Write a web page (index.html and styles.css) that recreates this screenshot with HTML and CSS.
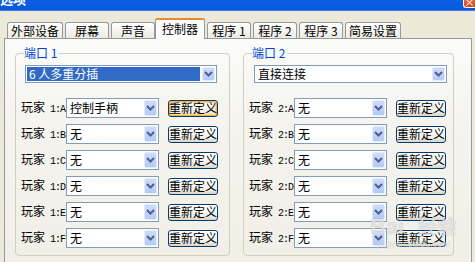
FILE: index.html
```html
<!DOCTYPE html>
<html lang="zh-CN">

<head>
  <meta charset="UTF-8">
  <title>选项</title>
  <link rel="stylesheet" href="styles.css">
</head>

<body>
  <div class="window">
    <div class="titlebar">
      <span class="title">选项</span>
      <span class="close">×</span>
    </div>

    <div class="dialog">
      <!-- tab strip -->
      <div class="tabs">
        <div class="tab">外部设备</div>
        <div class="tab">屏幕</div>
        <div class="tab">声音</div>
        <div class="tab active">控制器</div>
        <div class="tab">程序 1</div>
        <div class="tab">程序 2</div>
        <div class="tab">程序 3</div>
        <div class="tab">简易设置</div>
      </div>

      <div class="panel">
        <!-- port 1 -->
        <fieldset class="group port-1">
          <legend>端口 1</legend>
          <div class="combo wide">
            <span class="value selected">6 人多重分插</span>
            <span class="arrow"><svg width="9" height="6" viewBox="0 0 9 6"><path d="M1 1L4.5 4.5L8 1" /></svg></span>
          </div>

          <div class="rows">
            <div class="row">
              <span class="label">玩家<span class="port"> 1:A</span></span>
              <div class="combo"><span class="value">控制手柄</span><span class="arrow"><svg width="9" height="6" viewBox="0 0 9 6"><path d="M1 1L4.5 4.5L8 1" /></svg></span></div>
              <button class="btn focus">重新定义</button>
            </div>
            <div class="row">
              <span class="label">玩家<span class="port"> 1:B</span></span>
              <div class="combo"><span class="value">无</span><span class="arrow"><svg width="9" height="6" viewBox="0 0 9 6"><path d="M1 1L4.5 4.5L8 1" /></svg></span></div>
              <button class="btn">重新定义</button>
            </div>
            <div class="row">
              <span class="label">玩家<span class="port"> 1:C</span></span>
              <div class="combo"><span class="value">无</span><span class="arrow"><svg width="9" height="6" viewBox="0 0 9 6"><path d="M1 1L4.5 4.5L8 1" /></svg></span></div>
              <button class="btn">重新定义</button>
            </div>
            <div class="row">
              <span class="label">玩家<span class="port"> 1:D</span></span>
              <div class="combo"><span class="value">无</span><span class="arrow"><svg width="9" height="6" viewBox="0 0 9 6"><path d="M1 1L4.5 4.5L8 1" /></svg></span></div>
              <button class="btn">重新定义</button>
            </div>
            <div class="row">
              <span class="label">玩家<span class="port"> 1:E</span></span>
              <div class="combo"><span class="value">无</span><span class="arrow"><svg width="9" height="6" viewBox="0 0 9 6"><path d="M1 1L4.5 4.5L8 1" /></svg></span></div>
              <button class="btn">重新定义</button>
            </div>
            <div class="row">
              <span class="label">玩家<span class="port"> 1:F</span></span>
              <div class="combo"><span class="value">无</span><span class="arrow"><svg width="9" height="6" viewBox="0 0 9 6"><path d="M1 1L4.5 4.5L8 1" /></svg></span></div>
              <button class="btn">重新定义</button>
            </div>
          </div>
        </fieldset>

        <!-- port 2 -->
        <fieldset class="group port-2">
          <legend>端口 2</legend>
          <div class="combo wide">
            <span class="value">直接连接</span>
            <span class="arrow"><svg width="9" height="6" viewBox="0 0 9 6"><path d="M1 1L4.5 4.5L8 1" /></svg></span>
          </div>

          <div class="rows">
            <div class="row">
              <span class="label">玩家<span class="port"> 2:A</span></span>
              <div class="combo"><span class="value">无</span><span class="arrow"><svg width="9" height="6" viewBox="0 0 9 6"><path d="M1 1L4.5 4.5L8 1" /></svg></span></div>
              <button class="btn">重新定义</button>
            </div>
            <div class="row">
              <span class="label">玩家<span class="port"> 2:B</span></span>
              <div class="combo"><span class="value">无</span><span class="arrow"><svg width="9" height="6" viewBox="0 0 9 6"><path d="M1 1L4.5 4.5L8 1" /></svg></span></div>
              <button class="btn">重新定义</button>
            </div>
            <div class="row">
              <span class="label">玩家<span class="port"> 2:C</span></span>
              <div class="combo"><span class="value">无</span><span class="arrow"><svg width="9" height="6" viewBox="0 0 9 6"><path d="M1 1L4.5 4.5L8 1" /></svg></span></div>
              <button class="btn">重新定义</button>
            </div>
            <div class="row">
              <span class="label">玩家<span class="port"> 2:D</span></span>
              <div class="combo"><span class="value">无</span><span class="arrow"><svg width="9" height="6" viewBox="0 0 9 6"><path d="M1 1L4.5 4.5L8 1" /></svg></span></div>
              <button class="btn">重新定义</button>
            </div>
            <div class="row">
              <span class="label">玩家<span class="port"> 2:E</span></span>
              <div class="combo"><span class="value">无</span><span class="arrow"><svg width="9" height="6" viewBox="0 0 9 6"><path d="M1 1L4.5 4.5L8 1" /></svg></span></div>
              <button class="btn">重新定义</button>
            </div>
            <div class="row">
              <span class="label">玩家<span class="port"> 2:F</span></span>
              <div class="combo"><span class="value">无</span><span class="arrow"><svg width="9" height="6" viewBox="0 0 9 6"><path d="M1 1L4.5 4.5L8 1" /></svg></span></div>
              <button class="btn">重新定义</button>
            </div>
          </div>
        </fieldset>
      </div>
    </div>

    <!-- faint watermark over the bottom right corner -->
    <div class="watermark">
      <span class="wm-logo">Bai<span class="wm-cn">经验</span></span>
      <span class="wm-url">jingyan.baidu.com</span>
    </div>
  </div>
</body>

</html>
```

FILE: styles.css
```css
/* Windows XP style options dialog */
body {
  margin: 0;
  width: 475px;
  height: 262px;
  overflow: hidden;
  background-color: #ece9d8;
  font-family: "Noto Sans CJK SC", "Liberation Sans", sans-serif;
  font-size: 12px;
  color: #000;
}

.window {
  position: relative;
  height: 262px;
  overflow: hidden;
}

/* title bar (cropped at the top) */
.titlebar {
  display: flex;
  justify-content: space-between;
  height: 10px;
  overflow: hidden;
  background: linear-gradient(#0b5ee6, #0a58dc);
  border-bottom: 1px solid #3b7be8;
}

.title {
  margin-top: -10px;
  color: #fff;
  font-weight: bold;
  font-size: 13px;
  line-height: 18px;
}

.close {
  width: 11px;
  height: 7px;
  margin-top: -1px;
  border: 1px solid #fff;
  border-right: none;
  border-radius: 0 0 0 3px;
  background: linear-gradient(#e8643a, #d6451c);
  color: #fff;
  font-size: 11px;
  line-height: 4px;
  text-align: center;
  overflow: hidden;
}

.dialog {
  padding: 8px 0 0 4px;
}

/* tabs */
.tabs {
  display: flex;
  align-items: flex-end;
  gap: 2px;
  height: 19px;
  padding-left: 3px;
  position: relative;
  z-index: 2;
}

.tab {
  height: 15px;
  min-width: 36px;
  padding: 0 3px;
  border: 1px solid #919b9c;
  border-bottom: none;
  border-radius: 3px 3px 0 0;
  background: linear-gradient(#fff, #f3f2ec 60%, #ebeae3);
  line-height: 15px;
  text-align: center;
  white-space: nowrap;
}

.tab.active {
  height: 19px;
  margin: 0 -1px -1px -2px;
  padding: 0 6px;
  border-top: 2px solid #e68b2c;
  border-radius: 2px 2px 0 0;
  background: #fcfcfe;
  line-height: 18px;
}

.tab.active + .tab {
  margin-left: 1px;
}

/* tab page */
.panel {
  display: flex;
  gap: 13px;
  width: 468px;
  height: 226px;
  padding: 7px 0 0 10px;
  box-sizing: border-box;
  border: 1px solid #919b9c;
  background: linear-gradient(#fbfbf9, #f4f3ee 40%, #f1efe6);
}

.group {
  margin: 0;
  padding: 5px 6px 9px 5px;
  border: 1px solid #d0d0bf;
  border-radius: 4px;
  box-sizing: border-box;
  height: 210px;
}

.port-1 {
  width: 215px;
}

.port-2 {
  width: 211px;
}

.group legend {
  margin-left: 3px;
  padding: 0 2px 0 0;
  color: #0046d5;
  line-height: 14px;
}

.port-1 .combo.wide {
  margin-left: 4px;
  width: 192px;
}

.port-2 .combo.wide {
  margin-left: 5px;
  width: 193px;
}

/* combo boxes */
.combo {
  display: flex;
  align-items: center;
  justify-content: space-between;
  height: 20px;
  width: 93px;
  box-sizing: border-box;
  border: 1px solid #7f9db9;
  background-color: #fff;
  padding: 1px;
}

.combo.wide {
  height: 18px;
}

.value {
  padding-left: 2px;
  line-height: 14px;
  white-space: nowrap;
}

.value.selected {
  flex: 1;
  margin-right: 2px;
  background-color: #316ac5;
  color: #fff;
}

.arrow {
  display: flex;
  align-items: center;
  justify-content: center;
  width: 13px;
  height: 100%;
  box-sizing: border-box;
  border: 1px solid #e3ebfd;
  border-radius: 2px;
  background: linear-gradient(#cddbfd, #b5c9f7);
}

.arrow path {
  fill: none;
  stroke: #4d6185;
  stroke-width: 2;
}

/* player rows */
.rows {
  display: flex;
  flex-direction: column;
  gap: 6px;
  margin-top: 15px;
}

.row {
  display: flex;
  align-items: center;
}

.label {
  width: 45px;
  flex-shrink: 0;
  white-space: nowrap;
  line-height: 14px;
}

.port {
  font-family: "Liberation Mono", monospace;
  font-size: 10px;
  letter-spacing: -1px;
}

.btn {
  width: 50px;
  height: 17px;
  margin-left: 9px;
  padding: 0;
  border: 1px solid #003c74;
  border-radius: 3px;
  background: linear-gradient(#fff, #f0f0ea 70%, #d8d4c7);
  font-family: "Noto Sans CJK SC", sans-serif;
  font-size: 12px;
  line-height: 14px;
  color: #000;
}

.btn.focus {
  box-shadow: inset 0 0 0 1px #f8b330, inset 0 0 0 2px #fbd88d;
}

/* faint site watermark */
.watermark {
  position: absolute;
  left: 370px;
  top: 214px;
  display: flex;
  flex-direction: column;
  align-items: center;
  color: rgba(255, 255, 255, 0.6);
  pointer-events: none;
}

.wm-logo {
  font-family: "Liberation Sans", sans-serif;
  font-size: 22px;
  font-weight: bold;
  line-height: 24px;
  text-shadow: 0 0 1px rgba(120, 120, 120, 0.5);
}

.wm-cn {
  margin-left: 14px;
  font-family: "Noto Sans CJK SC", sans-serif;
  font-size: 19px;
}

.wm-url {
  font-family: "Liberation Sans", sans-serif;
  font-size: 9px;
  line-height: 10px;
  text-shadow: 0 0 1px rgba(120, 120, 120, 0.4);
}
```
